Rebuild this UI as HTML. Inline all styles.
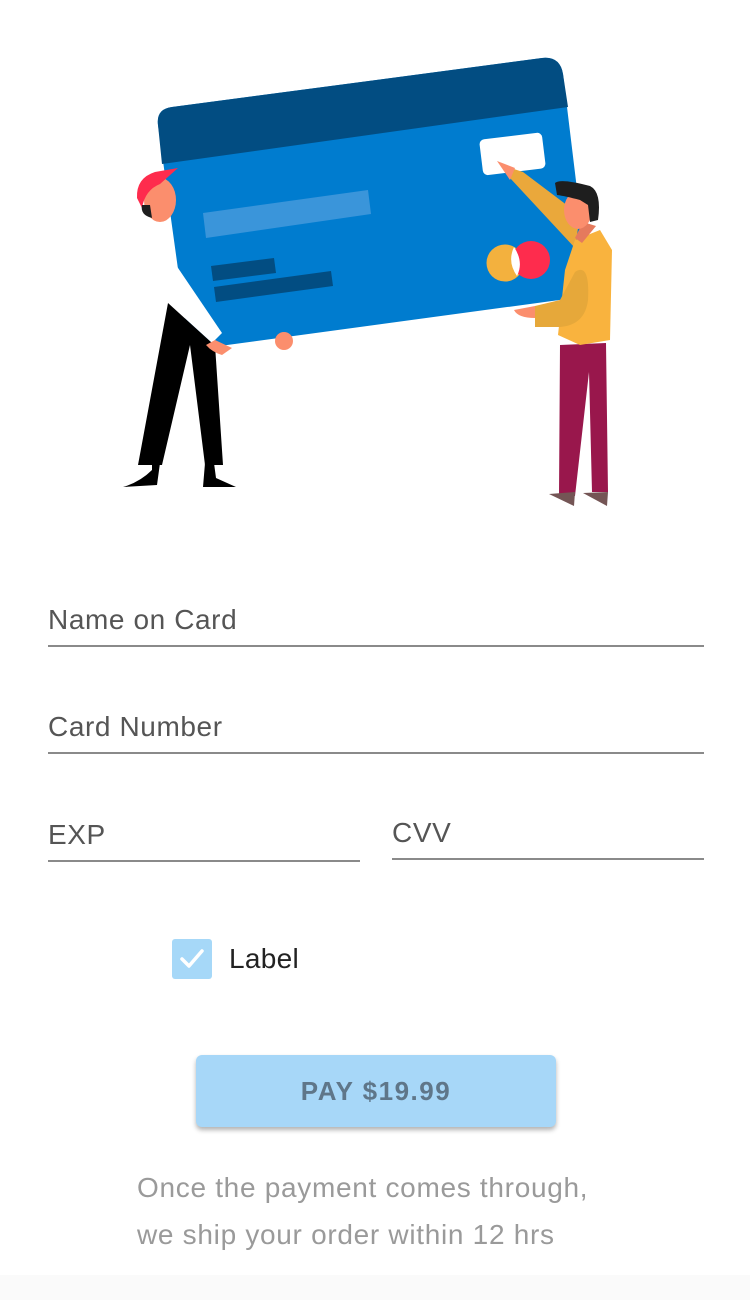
<!DOCTYPE html>
<html><head><meta charset="utf-8"><style>
html,body{margin:0;padding:0;background:#fff;width:750px;height:1300px;overflow:hidden;font-family:"Liberation Sans",sans-serif;}
.abs{position:absolute;}
.lbl{position:absolute;font-size:28px;color:#555;letter-spacing:0.6px;}
.line{position:absolute;height:2px;background:#8a8a8a;}
</style></head><body>
<svg class="abs" style="left:0;top:0" width="750" height="540" viewBox="0 0 750 540">
  <path d="M172,107 L542,58 Q560,56 563,74 L588,280 Q590,296 574,298 L205,348 Q189,350 187,334 L158,125 Q156,109 172,107Z" fill="#007ccf"/>
  <path d="M172,107 L542,58 Q560,56 563,74 L568,107 L162,164 L158,125 Q156,109 172,107Z" fill="#024d82"/>
  <path d="M203,213 L368,190 L371,214 L206,238Z" fill="#3a95da"/>
  <path d="M211,266 L274,258 L276,273 L213,281Z" fill="#024d82"/>
  <path d="M214,287 L331,271 L333,286 L216,302Z" fill="#024d82"/>
  <rect x="481" y="136" width="63" height="36" rx="5" fill="#fff" transform="rotate(-7 512 154)"/>
  <circle cx="505" cy="263" r="18.5" fill="#f3b13e"/>
  <circle cx="531" cy="260" r="19" fill="#fe2c4d"/>
  <path d="M514,247 Q507,262 517,276 Q524,262 514,247Z" fill="#fff"/>
  <path d="M168,303 L176,265 L222,333 L212,343 Z" fill="#fff"/>
  <path d="M168,303 L212,343 L215,345 L223,465 L205,465 L190,345 L162,465 L138,465Z" fill="#000"/>
  <path d="M152,463 L160,463 L157,485 L123,487 Q140,482 152,470Z M205,463 L214,463 L216,478 L236,487 L203,487Z" fill="#000"/>
  <path d="M206,345 L215,340 L232,348 L222,355 Q212,352 206,345Z" fill="#fb8e6d"/>
  <circle cx="284" cy="341" r="9" fill="#fb8e6d"/>
  <ellipse cx="160" cy="200" rx="16" ry="22" fill="#fb8e6d"/>
  <path d="M137,198 Q136,178 155,172 L178,168 L160,184 Q145,190 142,208Z" fill="#fe2c4d"/>
  <path d="M142,205 Q140,215 152,218 L150,205Z" fill="#1e1e1e"/>
  <path d="M498,162 Q510,168 523,172 L580,215 L575,248 L510,178Z" fill="#eaa83b"/>
  <path d="M497,161 L515,168 L510,180Z" fill="#fb8e6d"/>
  <path d="M560,345 L606,343 L608,492 L592,492 L589,372 L575,496 L559,496Z" fill="#99174c"/>
  <path d="M549,494 L575,492 L574,506 Z M583,493 L608,492 L607,506Z" fill="#745555"/>
  <path d="M575,240 L600,230 L612,250 L610,340 L580,345 L558,335 L565,270Z" fill="#f9b33e"/>
  <path d="M535,306 L560,300 L575,272 Q590,262 588,300 Q585,325 560,327 L535,327Z" fill="#e6a83a"/>
  <path d="M514,310 L535,306 L535,318 Q518,318 514,310Z" fill="#fb8e6d"/>
  <path d="M583,222 L596,226 L582,243 L575,238Z" fill="#e57a5d"/>
  <ellipse cx="578" cy="210" rx="14" ry="19" fill="#fb8e6d"/>
  <path d="M555,183 Q560,178 590,186 Q602,192 598,220 L590,222 L588,205 L580,200 Q565,196 557,195Z" fill="#1e1e1e"/>
</svg>

<div class="lbl" style="left:48px;top:604px;">Name on Card</div>
<div class="line" style="left:48px;top:645px;width:656px;"></div>
<div class="lbl" style="left:48px;top:711px;">Card Number</div>
<div class="line" style="left:48px;top:752px;width:656px;"></div>
<div class="lbl" style="left:48px;top:819px;">EXP</div>
<div class="line" style="left:48px;top:860px;width:312px;"></div>
<div class="lbl" style="left:392px;top:817px;">CVV</div>
<div class="line" style="left:392px;top:858px;width:312px;"></div>

<div class="abs" style="left:172px;top:939px;width:40px;height:40px;border-radius:3px;background:#a6d8f8;">
  <svg width="40" height="40"><path d="M10,20 L17,27 L30,12" stroke="#fff" stroke-width="3.5" fill="none" stroke-linecap="round" stroke-linejoin="round"/></svg>
</div>
<div class="abs" style="left:229px;top:943px;font-size:28px;color:#222;letter-spacing:0.3px;">Label</div>

<div class="abs" style="left:196px;top:1055px;width:360px;height:72px;border-radius:6px;background:#a7d7f8;box-shadow:0 3px 5px rgba(0,0,0,0.3);text-align:center;line-height:72px;font-size:26px;font-weight:bold;color:#5f7689;letter-spacing:1.5px;">PAY $19.99</div>

<div class="abs" style="left:137px;top:1164px;font-size:28px;color:#9a9a9a;line-height:47px;letter-spacing:0.7px;white-space:nowrap;">Once the payment comes through,<br>we ship your order within 12 hrs</div>
<div class="abs" style="left:0;top:1275px;width:750px;height:25px;background:#fafafa;"></div>
</body></html>
